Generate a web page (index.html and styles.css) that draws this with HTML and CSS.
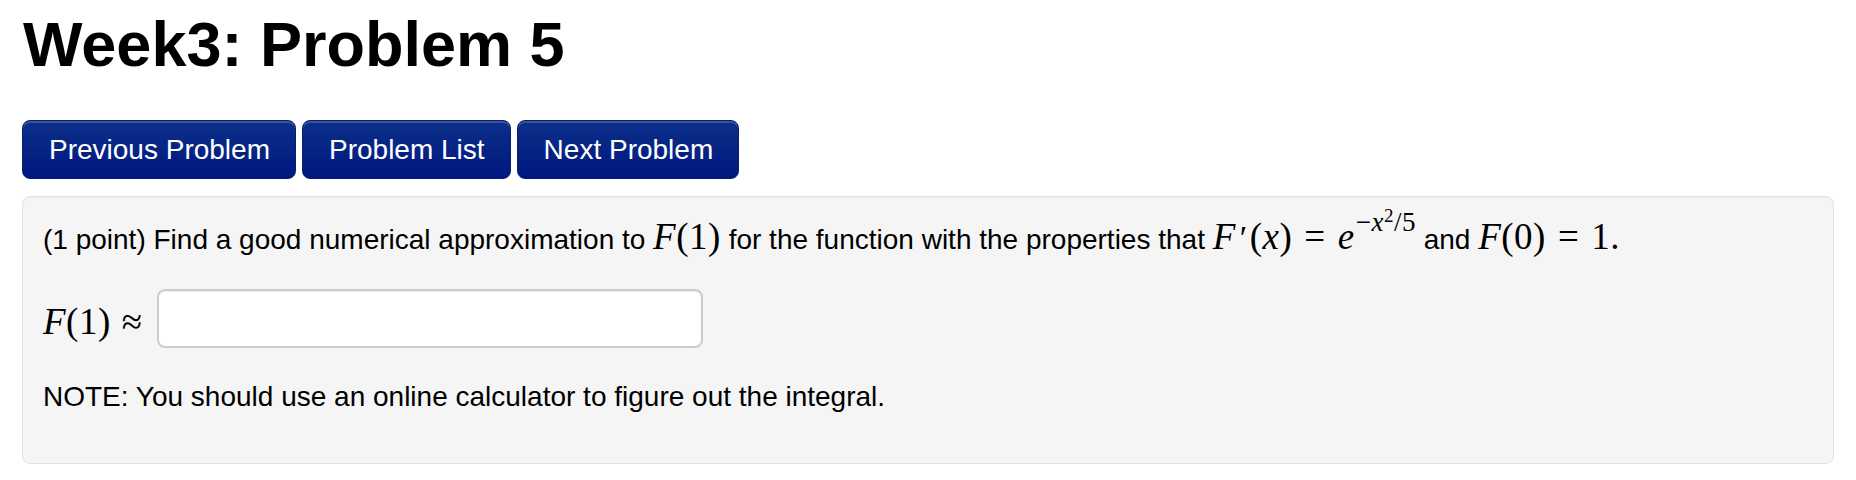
FILE: index.html
```html
<!DOCTYPE html>
<html lang="en">
<head>
<meta charset="utf-8">
<title>Week3: Problem 5</title>
<link rel="stylesheet" href="styles.css">
</head>
<body>
<h1 class="title">Week3: Problem 5</h1>
<div class="nav">
  <a class="btn" href="#">Previous Problem</a>
  <a class="btn" href="#">Problem List</a>
  <a class="btn" href="#">Next Problem</a>
</div>
<div class="well">
  <p class="line">(1 point) Find a good numerical approximation to <span class="m"><i>F</i>(1)</span> for the function with the properties that <span class="m"><i>F</i><span class="prime">′</span>(<i>x</i>)<span class="rel">=</span><i>e</i><span class="sup">−<i>x</i><span class="sup2">2</span>/5</span></span> and <span class="m"><i>F</i>(0)<span class="rel">=</span>1.</span></p>
  <div class="answer"><span class="m label"><i>F</i>(1)<span class="approx">≈</span></span><input class="field" type="text" aria-label="answer"></div>
  <p class="line note">NOTE: You should use an online calculator to figure out the integral.</p>
</div>
</body>
</html>
```
FILE: styles.css
```css
html, body {
  margin: 0;
  padding: 0;
  background: #ffffff;
}
body {
  padding: 0 22px;
  font-family: "Liberation Sans", Arial, Helvetica, sans-serif;
  color: #000;
}
.title {
  margin: 9px 0 0 1px;
  font-size: 63px;
  line-height: 70px;
  font-weight: bold;
}
.nav {
  display: flex;
  gap: 6px;
  margin-top: 41px;
}
.btn {
  display: block;
  box-sizing: border-box;
  height: 59px;
  padding: 9px 25px 0 26px;
  font-size: 28px;
  line-height: 40px;
  color: #ffffff;
  text-decoration: none;
  border: 1px solid #0a1d6c;
  border-radius: 8px;
  background: linear-gradient(to bottom, #0d2f8a 0%, #062584 45%, #001781 100%);
  box-shadow: inset 0 2px 0 rgba(255, 255, 255, 0.18);
}
.well {
  margin-top: 17px;
  box-sizing: border-box;
  height: 268px;
  padding: 21px 20px 0 20px;
  background: #f5f5f5;
  border: 1px solid #e2e2e2;
  border-radius: 8px;
  box-shadow: inset 0 1px 1px rgba(0, 0, 0, 0.04);
}
.line {
  margin: 0;
  font-size: 28px;
  line-height: 40px;
}
.m {
  font-family: "Liberation Serif", "Times New Roman", serif;
  font-size: 37px;
  line-height: 1;
  letter-spacing: 0.5px;
}
.m i {
  font-style: italic;
}
.prime {
  font-size: 34px;
  margin-left: 4px;
  margin-right: 2px;
}
.rel {
  margin: 0 12px;
}
.sup {
  font-size: 27px;
  line-height: 0;
  position: relative;
  top: -18px;
  margin-left: 1px;
}
.sup2 {
  font-size: 19px;
  position: relative;
  top: -9px;
}
.answer {
  margin-top: 29px;
  display: flex;
  align-items: center;
  height: 59px;
}
.label {
  display: inline-block;
  margin-top: 6px;
  margin-right: 14px;
}
.approx {
  margin-left: 11px;
}
.field {
  box-sizing: border-box;
  width: 546px;
  height: 59px;
  margin: 0;
  padding: 8px 12px;
  font-size: 28px;
  background: #ffffff;
  border: 2px solid #cccccc;
  border-radius: 8px;
  box-shadow: inset 0 1px 1px rgba(0, 0, 0, 0.075);
  outline: none;
}
.note {
  margin-top: 29px;
}
```
